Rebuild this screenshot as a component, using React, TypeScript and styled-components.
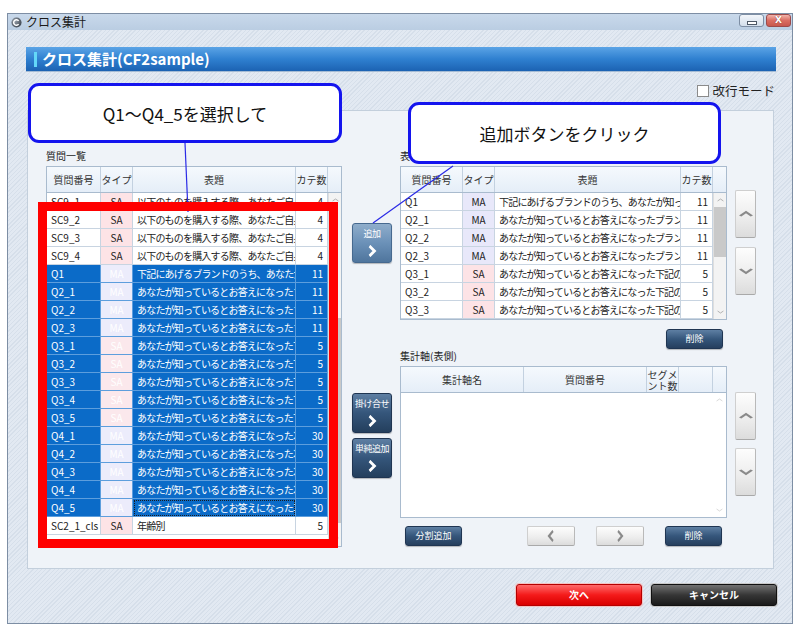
import React from "react";
import styled, { createGlobalStyle, css } from "styled-components";

const GlobalStyle = createGlobalStyle`
  html, body {
    margin: 0;
    padding: 0;
    background: #ffffff;
  }
  body {
    font-family: "Noto Sans CJK JP", "Noto Sans", sans-serif;
  }
`;

const Page = styled.div`
  position: relative;
  width: 800px;
  height: 632px;
  padding: 13px 0 0 7px;
  box-sizing: border-box;
  overflow: hidden;
`;

const Window = styled.div`
  width: 786px;
  height: 611px;
  box-sizing: border-box;
  border: 1px solid #7d8ea4;
  display: flex;
  flex-direction: column;
  background: repeating-linear-gradient(
    135deg,
    #e2e9f2 0 2px,
    #d6dfea 2px 3px
  );
`;

const TitleBar = styled.div`
  height: 16px;
  flex: none;
  display: flex;
  align-items: center;
  gap: 4px;
  padding-left: 3px;
  background: linear-gradient(#c9d9eb, #bacde2);
`;

const TitleText = styled.span`
  font-size: 12px;
  color: #1a1a1a;
  line-height: 16px;
`;

const WindowControls = styled.div`
  margin-left: auto;
  align-self: flex-start;
  display: flex;
  gap: 2px;
  padding-right: 1px;
`;

const CtrlButton = styled.span<{ $close?: boolean }>`
  width: 25px;
  height: 13px;
  border-radius: 3px;
  box-sizing: border-box;
  display: flex;
  align-items: center;
  justify-content: center;
  ${({ $close }) =>
    $close
      ? css`
          border: 1px solid #9c4a4a;
          background: linear-gradient(#f2b4aa, #da6d62 50%, #c8574d);
        `
      : css`
          border: 1px solid #7d8ea4;
          background: linear-gradient(#f3f6fa, #d3deeb);
        `}
`;

const MinDash = styled.span`
  width: 8px;
  height: 2px;
  background: #ffffff;
  border: 1px solid #4d5866;
  margin-top: 4px;
`;

const CloseX = styled.span`
  font-size: 9px;
  font-weight: bold;
  color: #ffffff;
  line-height: 11px;
  text-shadow: 0 0 1px #6a1f1f;
  font-family: "DejaVu Sans", sans-serif;
`;

const HeaderBar = styled.div`
  margin: 17px 16px 0 18px;
  height: 24px;
  flex: none;
  display: flex;
  align-items: center;
  gap: 5px;
  padding-left: 8px;
  background: linear-gradient(#5ba4e6, #2f80d0 50%, #1c62b2);
  box-shadow: 0 1px 0 #a4bbd4;
`;

const Accent = styled.span`
  width: 3px;
  height: 15px;
  background: #63d8f8;
`;

const HeaderTitle = styled.h1`
  margin: 0;
  font-size: 15px;
  font-weight: bold;
  color: #ffffff;
  line-height: 24px;
`;

const OptionsRow = styled.div`
  margin-top: 10px;
  height: 20px;
  flex: none;
  display: flex;
  justify-content: flex-end;
  align-items: center;
  gap: 3px;
  padding-right: 17px;
`;

const CheckBox = styled.span`
  width: 10px;
  height: 10px;
  background: #ffffff;
  border: 1px solid #8b8b8b;
`;

const OptionLabel = styled.span`
  font-size: 12.5px;
  color: #222;
  line-height: 20px;
`;

const Panel = styled.div`
  margin: 9px 18px 0 19px;
  height: 459px;
  flex: none;
  box-sizing: border-box;
  border: 1px solid #c3cfdc;
  background: #eff3f8;
  display: flex;
  padding: 39px 17px 0 18px;
`;

const Column = styled.div<{ $w: number; $ml?: number }>`
  width: ${({ $w }) => $w}px;
  margin-left: ${({ $ml }) => $ml ?? 0}px;
  flex: none;
  display: flex;
  flex-direction: column;
`;

const SectionLabel = styled.div<{ $mt?: number }>`
  font-size: 10px;
  line-height: 12px;
  height: 12px;
  color: #222;
  margin-top: ${({ $mt }) => $mt ?? 0}px;
  margin-bottom: 4px;
  white-space: nowrap;
`;

/* ---------- grid tables ---------- */

const TableFrame = styled.div<{ $h: number }>`
  height: ${({ $h }) => $h}px;
  flex: none;
  box-sizing: border-box;
  border: 1px solid #a9bbce;
  background: #ffffff;
  display: flex;
  flex-direction: column;
  overflow: hidden;
`;

const HeadRow = styled.div<{ $cols: string }>`
  display: grid;
  grid-template-columns: ${({ $cols }) => $cols};
  height: 25px;
  flex: none;
  background: linear-gradient(#f5f9fd, #e5eef8);
  border-bottom: 1px solid #a9bbce;
`;

const HeadCell = styled.div`
  border-right: 1px solid #c3d1e0;
  display: flex;
  align-items: center;
  justify-content: center;
  text-align: center;
  font-size: 10px;
  line-height: 11px;
  color: #333;
  white-space: pre-line;
  &:last-child {
    border-right: none;
  }
`;

const TableBody = styled.div`
  flex: 1;
  min-height: 0;
  display: flex;
`;

const Rows = styled.div<{ $w: number }>`
  width: ${({ $w }) => $w}px;
  flex: none;
  overflow: hidden;
`;

const Row = styled.div<{ $cols: string }>`
  display: grid;
  grid-template-columns: ${({ $cols }) => $cols};
  height: 18px;
`;

type Kind = "SA" | "MA";

const Cell = styled.div<{
  $align?: "left" | "center" | "right";
  $sel?: boolean;
  $kind?: Kind;
  $tight?: boolean;
  $focus?: boolean;
}>`
  box-sizing: border-box;
  padding: 0 4px;
  font-size: 10px;
  line-height: 17px;
  white-space: nowrap;
  overflow: hidden;
  text-align: ${({ $align }) => $align ?? "left"};
  letter-spacing: ${({ $tight }) => ($tight ? "-0.8px" : "0")};
  border-right: 1px solid ${({ $sel }) => ($sel ? "#5d9edd" : "#c8d4e1")};
  border-bottom: 1px solid ${({ $sel }) => ($sel ? "#5d9edd" : "#c8d4e1")};
  color: ${({ $sel }) => ($sel ? "#ffffff" : "#222")};
  background: ${({ $kind, $sel }) =>
    $kind === "SA"
      ? $sel
        ? "#fbe8ec"
        : "#fde3e6"
      : $kind === "MA"
      ? $sel
        ? "#ececfb"
        : "#e8e8fa"
      : $sel
      ? "#0b6bc8"
      : "#ffffff"};
  ${({ $focus }) =>
    $focus &&
    css`
      outline: 1px dotted #1a1a1a;
      outline-offset: -2px;
    `}
`;

const ScrollTrack = styled.div`
  flex: 1;
  background: #f3f3f3;
  border-left: 1px solid #dedede;
  display: flex;
  flex-direction: column;
  align-items: center;
`;

const ScrollArrow = styled.div`
  height: 14px;
  flex: none;
  display: flex;
  align-items: center;
  justify-content: center;
`;

const ScrollThumb = styled.div<{ $mt: number; $h: number }>`
  width: 100%;
  margin-top: ${({ $mt }) => $mt}px;
  height: ${({ $h }) => $h}px;
  background: #c9c9c9;
  flex: none;
`;

const ScrollSpacer = styled.div`
  flex: 1;
`;

/* ---------- buttons ---------- */

const SideButton = styled.button<{ $active?: boolean; $mt: number }>`
  width: 40px;
  height: 40px;
  margin-top: ${({ $mt }) => $mt}px;
  padding: 5px 0 0;
  box-sizing: border-box;
  border-radius: 3px;
  border: 1px solid ${({ $active }) => ($active ? "#46698f" : "#1f3552")};
  background: ${({ $active }) =>
    $active
      ? "linear-gradient(#8fadcb, #6b91b8 50%, #4f759d)"
      : "linear-gradient(#5e7fa3, #35567b 50%, #243f5d)"};
  display: flex;
  flex-direction: column;
  align-items: center;
  gap: 6px;
  font-family: inherit;
  font-size: 9px;
  line-height: 10px;
  color: #ffffff;
  white-space: nowrap;
  letter-spacing: -0.5px;
  box-shadow: 0 1px 1px rgba(0, 0, 0, 0.25);
`;

const DarkButton = styled.button<{ $w: number }>`
  width: ${({ $w }) => $w}px;
  height: 20px;
  flex: none;
  padding: 0;
  border-radius: 3px;
  border: 1px solid #1f3552;
  background: linear-gradient(#5e7fa3, #35567b 50%, #263f5e);
  color: #ffffff;
  font-family: inherit;
  font-size: 9px;
  line-height: 18px;
  box-shadow: 0 1px 1px rgba(0, 0, 0, 0.25);
`;

const LightButton = styled.button<{ $w: number; $h: number; $mt?: number }>`
  width: ${({ $w }) => $w}px;
  height: ${({ $h }) => $h}px;
  margin-top: ${({ $mt }) => $mt ?? 0}px;
  flex: none;
  padding: 0;
  border-radius: 2px;
  border: 1px solid #cfcfcf;
  border-bottom-color: #a9a9a9;
  border-right-color: #b9b9b9;
  background: linear-gradient(#fdfdfd, #ececec 60%, #dcdcdc);
  display: flex;
  align-items: center;
  justify-content: center;
`;

const ButtonRow = styled.div<{ $mt: number }>`
  margin-top: ${({ $mt }) => $mt}px;
  display: flex;
  padding: 0 5px 0 5px;
  gap: 21px;
  & > :nth-child(2) {
    margin-left: auto;
  }
`;

const RightAligned = styled.div<{ $mt: number }>`
  margin-top: ${({ $mt }) => $mt}px;
  display: flex;
  justify-content: flex-end;
  padding-right: 4px;
`;

const Footer = styled.div`
  margin-top: 15px;
  display: flex;
  justify-content: flex-end;
  gap: 9px;
  padding-right: 15px;
`;

const FooterButton = styled.button<{ $variant: "next" | "cancel" }>`
  width: 126px;
  height: 22px;
  padding: 0;
  border-radius: 3px;
  font-family: inherit;
  font-size: 10px;
  font-weight: bold;
  color: #ffffff;
  line-height: 20px;
  ${({ $variant }) =>
    $variant === "next"
      ? css`
          border: 1px solid #b40000;
          background: linear-gradient(#ff6a6a, #f41a1a 50%, #d90000);
          box-shadow: 0 0 0 1px #f3c4c4;
        `
      : css`
          border: 1px solid #111111;
          background: linear-gradient(#727272, #363636 50%, #1a1a1a);
          box-shadow: 0 0 0 1px #c9c9c9;
        `}
`;

/* ---------- overlays ---------- */

const Callout = styled.div<{ $x: number; $y: number; $w: number; $h: number }>`
  position: absolute;
  left: ${({ $x }) => $x}px;
  top: ${({ $y }) => $y}px;
  width: ${({ $w }) => $w}px;
  height: ${({ $h }) => $h}px;
  box-sizing: border-box;
  border: 3px solid #1414ee;
  border-radius: 11px;
  background: #ffffff;
  display: flex;
  align-items: center;
  justify-content: center;
  font-size: 17px;
  color: #111;
`;

const RedFrame = styled.div`
  position: absolute;
  left: 38px;
  top: 202px;
  width: 300px;
  height: 346px;
  box-sizing: border-box;
  border: 9px solid #ff0000;
`;

const LineLayer = styled.svg`
  position: absolute;
  left: 0;
  top: 0;
  pointer-events: none;
`;

/* ---------- icons ---------- */

type Dir = "up" | "down" | "left" | "right";

const chevronPoints: Record<Dir, string> = {
  right: "3,1 9,6 3,11",
  left: "9,1 3,6 9,11",
  up: "1,9 6,3 11,9",
  down: "1,3 6,9 11,3",
};

const Chevron = ({
  dir,
  w,
  h,
  color,
  sw,
}: {
  dir: Dir;
  w: number;
  h: number;
  color: string;
  sw: number;
}) => (
  <svg width={w} height={h} viewBox="0 0 12 12" preserveAspectRatio="none">
    <polyline
      points={chevronPoints[dir]}
      fill="none"
      stroke={color}
      strokeWidth={sw}
      strokeLinejoin="miter"
    />
  </svg>
);

const AppIcon = () => (
  <svg width="11" height="11" viewBox="0 0 12 12">
    <defs>
      <radialGradient id="ai" cx="0.35" cy="0.35" r="0.7">
        <stop offset="0" stopColor="#9aa3ad" />
        <stop offset="1" stopColor="#3e4650" />
      </radialGradient>
    </defs>
    <circle cx="6" cy="6" r="5.5" fill="url(#ai)" />
    <path
      d="M8.3 4.2 A3 3 0 1 0 8.3 7.8"
      fill="none"
      stroke="#ffffff"
      strokeWidth="1.6"
    />
  </svg>
);

/* ---------- data ---------- */

type Item = { no: string; type: Kind; title: string; cat: number; sel?: boolean; focus?: boolean };

const SC9 = "以下のものを購入する際、あなたご自身";
const Q1T = "下記にあげるブランドのうち、あなたが知っているもの";
const Q2T = "あなたが知っているとお答えになったブランド";
const Q3T = "あなたが知っているとお答えになった下記の";
const Q4T = "あなたが知っているとお答えになった次の";

const questionList: Item[] = [
  { no: "SC9_1", type: "SA", title: SC9, cat: 4 },
  { no: "SC9_2", type: "SA", title: SC9, cat: 4 },
  { no: "SC9_3", type: "SA", title: SC9, cat: 4 },
  { no: "SC9_4", type: "SA", title: SC9, cat: 4 },
  { no: "Q1", type: "MA", title: Q1T, cat: 11, sel: true },
  { no: "Q2_1", type: "MA", title: Q2T, cat: 11, sel: true },
  { no: "Q2_2", type: "MA", title: Q2T, cat: 11, sel: true },
  { no: "Q2_3", type: "MA", title: Q2T, cat: 11, sel: true },
  { no: "Q3_1", type: "SA", title: Q3T, cat: 5, sel: true },
  { no: "Q3_2", type: "SA", title: Q3T, cat: 5, sel: true },
  { no: "Q3_3", type: "SA", title: Q3T, cat: 5, sel: true },
  { no: "Q3_4", type: "SA", title: Q3T, cat: 5, sel: true },
  { no: "Q3_5", type: "SA", title: Q3T, cat: 5, sel: true },
  { no: "Q4_1", type: "MA", title: Q4T, cat: 30, sel: true },
  { no: "Q4_2", type: "MA", title: Q4T, cat: 30, sel: true },
  { no: "Q4_3", type: "MA", title: Q4T, cat: 30, sel: true },
  { no: "Q4_4", type: "MA", title: Q4T, cat: 30, sel: true },
  { no: "Q4_5", type: "MA", title: Q4T, cat: 30, sel: true, focus: true },
  { no: "SC2_1_cls", type: "SA", title: "年齢別", cat: 5 },
];

const headList: Item[] = [
  { no: "Q1", type: "MA", title: Q1T, cat: 11 },
  { no: "Q2_1", type: "MA", title: Q2T, cat: 11 },
  { no: "Q2_2", type: "MA", title: Q2T, cat: 11 },
  { no: "Q2_3", type: "MA", title: Q2T, cat: 11 },
  { no: "Q3_1", type: "SA", title: Q3T, cat: 5 },
  { no: "Q3_2", type: "SA", title: Q3T, cat: 5 },
  { no: "Q3_3", type: "SA", title: Q3T, cat: 5 },
  { no: "Q3_4", type: "SA", title: Q3T, cat: 5 },
];

/* ---------- pieces ---------- */

interface QuestionTableProps {
  items: Item[];
  widths: number[];
  height: number;
  thumb?: { mt: number; h: number };
}

const QuestionTable = ({ items, widths, height, thumb }: QuestionTableProps) => {
  const cols = widths.map((w) => `${w}px`).join(" ");
  const rowsWidth = widths.reduce((a, b) => a + b, 0);
  return (
    <TableFrame $h={height}>
      <HeadRow $cols={`${cols} 1fr`}>
        <HeadCell>質問番号</HeadCell>
        <HeadCell>タイプ</HeadCell>
        <HeadCell>表題</HeadCell>
        <HeadCell>カテ数</HeadCell>
        <HeadCell />
      </HeadRow>
      <TableBody>
        <Rows $w={rowsWidth}>
          {items.map((it) => (
            <Row key={it.no} $cols={cols}>
              <Cell $sel={it.sel}>{it.no}</Cell>
              <Cell $sel={it.sel} $kind={it.type} $align="center">
                {it.type}
              </Cell>
              <Cell $sel={it.sel} $tight $focus={it.focus}>
                {it.title}
              </Cell>
              <Cell $sel={it.sel} $align="right">
                {it.cat}
              </Cell>
            </Row>
          ))}
        </Rows>
        <ScrollTrack>
          <ScrollArrow>
            <Chevron dir="up" w={7} h={4} color="#9a9a9a" sw={1.6} />
          </ScrollArrow>
          {thumb && <ScrollThumb $mt={thumb.mt} $h={thumb.h} />}
          <ScrollSpacer />
          <ScrollArrow>
            <Chevron dir="down" w={7} h={4} color="#9a9a9a" sw={1.6} />
          </ScrollArrow>
        </ScrollTrack>
      </TableBody>
    </TableFrame>
  );
};

const AxisTable = () => (
  <TableFrame $h={152}>
    <HeadRow $cols="123px 123px 32px 34px 1fr">
      <HeadCell>集計軸名</HeadCell>
      <HeadCell>質問番号</HeadCell>
      <HeadCell>{"セグメ\nント数"}</HeadCell>
      <HeadCell />
      <HeadCell />
    </HeadRow>
    <TableBody>
      <Rows $w={312} />
      <ScrollTrack style={{ background: "#ffffff", borderLeft: "none" }}>
        <ScrollArrow>
          <Chevron dir="up" w={7} h={4} color="#c4c4c4" sw={1.4} />
        </ScrollArrow>
        <ScrollSpacer />
        <ScrollArrow>
          <Chevron dir="down" w={7} h={4} color="#c4c4c4" sw={1.4} />
        </ScrollArrow>
      </ScrollTrack>
    </TableBody>
  </TableFrame>
);

const MoveButton = ({ label, mt, active }: { label: string; mt: number; active?: boolean }) => (
  <SideButton $mt={mt} $active={active}>
    <span>{label}</span>
    <Chevron dir="right" w={10} h={12} color="#ffffff" sw={3} />
  </SideButton>
);

const OrderButton = ({ dir, mt }: { dir: Dir; mt: number }) => (
  <LightButton $w={21} $h={48} $mt={mt}>
    <Chevron dir={dir} w={14} h={8} color="#8a8a8a" sw={2.6} />
  </LightButton>
);

const App = () => {
  return (
    <Page>
      <GlobalStyle />
      <Window>
        <TitleBar>
          <AppIcon />
          <TitleText>クロス集計</TitleText>
          <WindowControls>
            <CtrlButton>
              <MinDash />
            </CtrlButton>
            <CtrlButton $close>
              <CloseX>X</CloseX>
            </CtrlButton>
          </WindowControls>
        </TitleBar>

        <HeaderBar>
          <Accent />
          <HeaderTitle>クロス集計(CF2sample)</HeaderTitle>
        </HeaderBar>

        <OptionsRow>
          <CheckBox />
          <OptionLabel>改行モード</OptionLabel>
        </OptionsRow>

        <Panel>
          <Column $w={296}>
            <SectionLabel>質問一覧</SectionLabel>
            <QuestionTable
              items={questionList}
              widths={[54, 32, 163, 32]}
              height={381}
              thumb={{ mt: 111, h: 205 }}
            />
          </Column>

          <Column $w={40} $ml={10}>
            <MoveButton label="追加" mt={73} active />
            <MoveButton label="掛け合せ" mt={130} />
            <MoveButton label="単純追加" mt={5} />
          </Column>

          <Column $w={327} $ml={8}>
            <SectionLabel>表側候補</SectionLabel>
            <QuestionTable
              items={headList}
              widths={[62, 32, 186, 32]}
              height={154}
              thumb={{ mt: 0, h: 50 }}
            />
            <RightAligned $mt={9}>
              <DarkButton $w={57}>削除</DarkButton>
            </RightAligned>
            <SectionLabel $mt={1}>集計軸(表側)</SectionLabel>
            <AxisTable />
            <ButtonRow $mt={8}>
              <DarkButton $w={57}>分割追加</DarkButton>
              <LightButton $w={48} $h={20}>
                <Chevron dir="left" w={8} h={12} color="#8a8a8a" sw={2.8} />
              </LightButton>
              <LightButton $w={48} $h={20}>
                <Chevron dir="right" w={8} h={12} color="#8a8a8a" sw={2.8} />
              </LightButton>
              <DarkButton $w={57}>削除</DarkButton>
            </ButtonRow>
          </Column>

          <Column $w={21} $ml={8}>
            <OrderButton dir="up" mt={40} />
            <OrderButton dir="down" mt={9} />
            <OrderButton dir="up" mt={97} />
            <OrderButton dir="down" mt={8} />
          </Column>
        </Panel>

        <Footer>
          <FooterButton $variant="next">次へ</FooterButton>
          <FooterButton $variant="cancel">キャンセル</FooterButton>
        </Footer>
      </Window>

      <Callout $x={28} $y={83} $w={314} $h={60}>
        Q1～Q4_5を選択して
      </Callout>
      <Callout $x={408} $y={102} $w={313} $h={62}>
        追加ボタンをクリック
      </Callout>
      <LineLayer width={800} height={632}>
        <line x1={185} y1={143} x2={188} y2={212} stroke="#2a2ae6" strokeWidth={1.2} />
        <line x1={453} y1={166} x2={373} y2={223} stroke="#2a2ae6" strokeWidth={1.2} />
      </LineLayer>
      <RedFrame />
    </Page>
  );
};

export default App;
